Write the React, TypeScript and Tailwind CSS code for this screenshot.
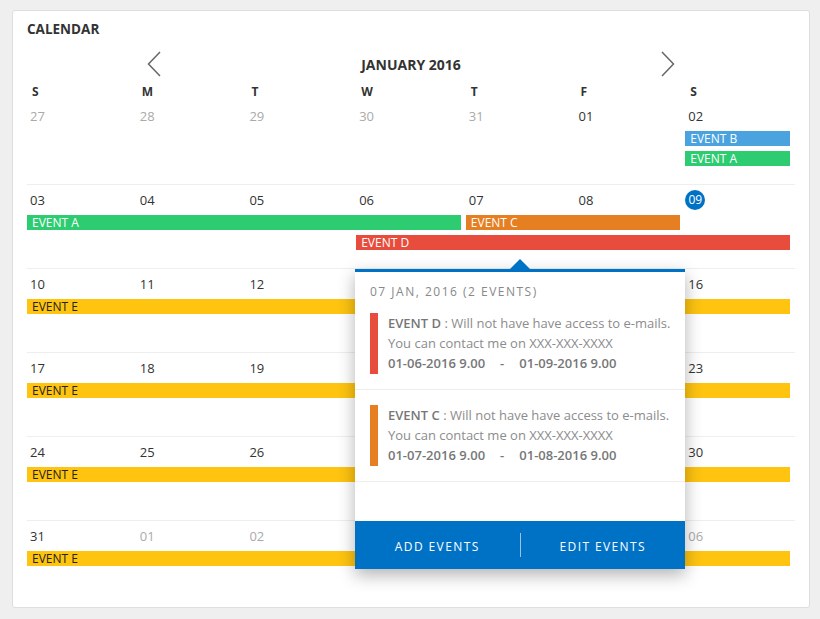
import React from "react";

type Bar = { label: string; start: number; span: number; lane: number; color: string; dark?: boolean };
type Day = { n: string; muted?: boolean; today?: boolean };

const colStart: Record<number, string> = {
  1: "col-start-1",
  2: "col-start-2",
  3: "col-start-3",
  4: "col-start-4",
  5: "col-start-5",
  6: "col-start-6",
  7: "col-start-7",
};
const colSpan: Record<number, string> = {
  1: "col-span-1",
  2: "col-span-2",
  3: "col-span-3",
  4: "col-span-4",
  5: "col-span-5",
  6: "col-span-6",
  7: "col-span-7",
};
const laneRow: Record<number, string> = {
  1: "row-start-2",
  2: "row-start-3 mt-[5px]",
};

const GREEN = "bg-[#2ecc71]";
const BLUE = "bg-[#4aa3df]";
const ORANGE = "bg-[#e67e22]";
const RED = "bg-[#e74c3c]";
const YELLOW = "bg-[#fec410]";

const d = (list: string, mutedIdx: number[] = [], todayIdx = -1): Day[] =>
  list.split(" ").map((n, i) => ({ n, muted: mutedIdx.includes(i), today: i === todayIdx }));

const weeks: { days: Day[]; bars: Bar[] }[] = [
  {
    days: d("27 28 29 30 31 01 02", [0, 1, 2, 3, 4]),
    bars: [
      { label: "EVENT B", start: 7, span: 1, lane: 1, color: BLUE },
      { label: "EVENT A", start: 7, span: 1, lane: 2, color: GREEN },
    ],
  },
  {
    days: d("03 04 05 06 07 08 09", [], 6),
    bars: [
      { label: "EVENT A", start: 1, span: 4, lane: 1, color: GREEN },
      { label: "EVENT C", start: 5, span: 2, lane: 1, color: ORANGE },
      { label: "EVENT D", start: 4, span: 4, lane: 2, color: RED },
    ],
  },
  {
    days: d("10 11 12 13 14 15 16"),
    bars: [{ label: "EVENT E", start: 1, span: 7, lane: 1, color: YELLOW, dark: true }],
  },
  {
    days: d("17 18 19 20 21 22 23"),
    bars: [{ label: "EVENT E", start: 1, span: 7, lane: 1, color: YELLOW, dark: true }],
  },
  {
    days: d("24 25 26 27 28 29 30"),
    bars: [{ label: "EVENT E", start: 1, span: 7, lane: 1, color: YELLOW, dark: true }],
  },
  {
    days: d("31 01 02 03 04 05 06", [1, 2, 3, 4, 5, 6]),
    bars: [{ label: "EVENT E", start: 1, span: 7, lane: 1, color: YELLOW, dark: true }],
  },
];

const Chevron = ({ dir }: { dir: "left" | "right" }) => (
  <svg width="14" height="26" viewBox="0 0 14 26" className="shrink-0">
    <polyline
      points={dir === "left" ? "13,1 1.5,13 13,25" : "1,1 12.5,13 1,25"}
      fill="none"
      stroke="#666"
      strokeWidth="1.5"
    />
  </svg>
);

const PopEvent = ({
  color,
  name,
  from,
  to,
}: {
  color: string;
  name: string;
  from: string;
  to: string;
}) => (
  <div className="flex px-[15px] py-[15px] border-b border-[#eeeeee]">
    <div className={`w-[8px] h-[61px] shrink-0 ${color}`} />
    <div className="ml-[10px] text-[13px] leading-[20px] text-[#8c8c8c] whitespace-nowrap">
      <div>
        <span className="font-semibold text-[#777]">EVENT {name}</span> : Will not have have access to e-mails.
      </div>
      <div>You can contact me on XXX-XXX-XXXX</div>
      <div className="font-semibold text-[#777]">
        {from}
        <span className="mx-[15px]">-</span>
        {to}
      </div>
    </div>
  </div>
);

export default function App() {
  return (
    <div className="w-[820px] h-[619px] bg-[#efefef] pt-[10px] pl-[12px] font-['Open_Sans',sans-serif]">
      <div className="w-[798px] h-[598px] bg-white border border-[#dedede] rounded-[3px] px-[14px]">
        <div className="pt-[9px] leading-[18px] text-[13.5px] font-bold text-[#333]">CALENDAR</div>
        <div className="mt-[12px] h-[28px] flex items-center justify-center">
          <Chevron dir="left" />
          <div className="w-[500px] text-center text-[14px] font-bold text-[#333] leading-[18px] pt-[2px]">
            JANUARY 2016
          </div>
          <Chevron dir="right" />
        </div>
        <div className="grid grid-cols-7 h-[22px] items-end">
          {["S", "M", "T", "W", "T", "F", "S"].map((w, i) => (
            <div key={i} className="pl-[5px] text-[12px] font-bold text-[#333] leading-[16px]">
              {w}
            </div>
          ))}
        </div>
        <div className="relative">
          {weeks.map((wk, wi) => (
            <div
              key={wi}
              className={`grid grid-cols-7 content-start h-[84px] ${wi > 0 ? "border-t border-[#eeeeee]" : ""}`}
            >
              {wk.days.map((day, di) => (
                <div
                  key={di}
                  className={`row-start-1 ${colStart[di + 1]} h-[31px] ${wi > 0 ? "pt-[5px]" : "pt-[6px]"}`}
                >
                  {day.today ? (
                    <div className="w-[20px] h-[20px] rounded-full bg-[#0072c6] text-white text-[12px] leading-[20px] text-center">
                      {day.n}
                    </div>
                  ) : (
                    <div
                      className={`pl-[3px] h-[20px] leading-[20px] text-[13px] ${
                        day.muted ? "text-[#aaaaaa]" : "text-[#333]"
                      }`}
                    >
                      {day.n}
                    </div>
                  )}
                </div>
              ))}
              {wk.bars.map((b, bi) => (
                <div
                  key={bi}
                  className={`${laneRow[b.lane]} ${colStart[b.start]} ${colSpan[b.span]} ${b.color} ${
                    wi > 0 && b.lane === 1 ? "-mt-[1px]" : ""
                  } mr-[5px] h-[15px] pl-[5px] text-[12px] leading-[15px] ${
                    b.dark ? "text-[#222]" : "text-white"
                  }`}
                >
                  {b.label}
                </div>
              ))}
            </div>
          ))}

          <div className="absolute left-[328px] top-[169px] w-[330px] h-[300px] bg-white border-t-[3px] border-[#0072c6] shadow-[0_6px_16px_rgba(0,0,0,0.3)] flex flex-col z-10">
            <div className="absolute left-[155px] top-[-13px] w-0 h-0 border-l-[10px] border-r-[10px] border-b-[10px] border-l-transparent border-r-transparent border-b-[#0072c6]" />
            <div className="h-[26px] pt-[12px] px-[15px] text-[12px] leading-[16px] tracking-[1.5px] text-[#888]">
              07 JAN, 2016 (2 EVENTS)
            </div>
            <PopEvent color="bg-[#e74c3c]" name="D" from="01-06-2016 9.00" to="01-09-2016 9.00" />
            <PopEvent color="bg-[#e67e22]" name="C" from="01-07-2016 9.00" to="01-08-2016 9.00" />
            <div className="flex-1" />
            <div className="h-[48px] bg-[#0072c6] flex items-center pt-[3px] text-white text-[12px] tracking-[1.4px]">
              <div className="flex-1 text-center">ADD EVENTS</div>
              <div className="w-px h-[24px] bg-[#9cc3e6] -mt-[3px]" />
              <div className="flex-1 text-center">EDIT EVENTS</div>
            </div>
          </div>
        </div>
      </div>
    </div>
  );
}
